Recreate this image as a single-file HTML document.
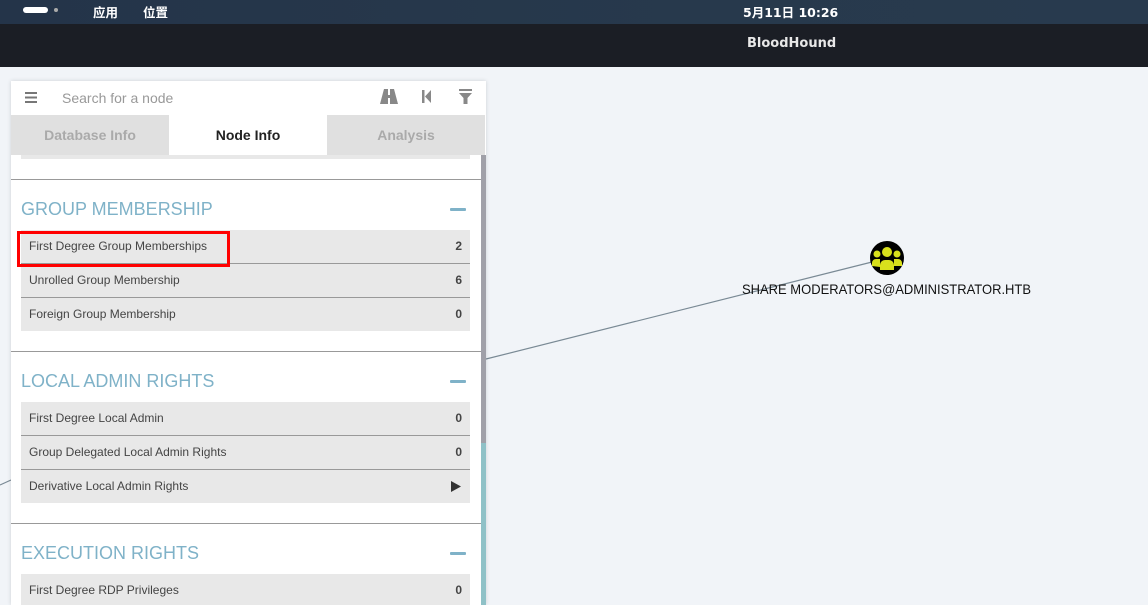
<!DOCTYPE html>
<html><head><meta charset="utf-8"><style>
*{margin:0;padding:0;box-sizing:border-box}
body{width:1148px;height:605px;overflow:hidden;background:#f1f4f8;font-family:"Liberation Sans","Noto Sans CJK SC",sans-serif;position:relative}
.top{position:absolute;left:0;top:0;width:1148px;height:24px;background:linear-gradient(90deg,#243449,#27394c 60%,#283a4e);color:#fff;font-family:"DejaVu Sans","Noto Sans CJK SC",sans-serif;font-size:12.5px;font-weight:bold}
.hdr{position:absolute;left:0;top:24px;width:1148px;height:43px;background:#1b1e25;color:#e8e8e8;font-family:"DejaVu Sans",sans-serif;font-size:13px;font-weight:bold}
.panel{position:absolute;left:11px;top:81px;width:475px;height:524px;background:#fff;box-shadow:0 0 4px rgba(0,0,0,.15);overflow:hidden}
.search{height:34px;position:relative;color:#999;font-size:14px}
.tabs{position:absolute;top:34px;left:0;width:475px;height:40px;font-weight:bold;font-size:14px}
.tab{position:absolute;top:0;height:40px;line-height:40px;text-align:center;background:#e0e0e0;color:#aaa}
.sep{position:absolute;left:0;width:470px;border-top:1px solid #999}
.h{position:absolute;left:10px;font-size:18px;color:#7fb2c8}
.minus{position:absolute;left:439px;width:16px;height:3px;background:#7fb2c8;border-radius:1px}
.row{position:absolute;left:10px;width:449px;height:34px;background:#e8e8e8;font-size:12px;color:#444;line-height:32px;padding-left:8px;border-bottom:1px solid #999}
.row b{position:absolute;right:8px;top:0;color:#444}
</style></head><body>
<div class="top">
 <div style="position:absolute;left:23px;top:7px;width:25px;height:6px;border-radius:3px;background:#fff"></div>
 <div style="position:absolute;left:54px;top:8px;width:4px;height:4px;border-radius:2px;background:#aaa"></div>
 <span style="position:absolute;left:93px;top:2px">应用</span>
 <span style="position:absolute;left:143px;top:2px">位置</span>
 <span style="position:absolute;left:743px;top:2px">5月11日 10:26</span>
</div>
<div class="hdr"><span style="position:absolute;left:747px;top:12px">BloodHound</span></div>
<svg style="position:absolute;left:0;top:0" width="1148" height="605">
<line x1="486" y1="359" x2="872" y2="262" stroke="#7a8a95" stroke-width="1.2"/>
<line x1="0" y1="485" x2="11" y2="480" stroke="#7a8a95" stroke-width="1.2"/>
<circle cx="887" cy="258" r="17" fill="#000"/>
<circle cx="887" cy="252" r="5" fill="#d8e01c"/><circle cx="877" cy="254" r="3.5" fill="#d8e01c"/><circle cx="897" cy="254" r="3.5" fill="#d8e01c"/>
<path d="M872 266 v-3 a4 4 0 0 1 4-4 h4 v8z M894 259 h4 a4 4 0 0 1 4 4 v3 h-8z M880 270 v-5 a5 5 0 0 1 5-5 h4 a5 5 0 0 1 5 5 v5z" fill="#d8e01c"/>
<text x="742" y="294" font-family="Liberation Sans,sans-serif" font-size="14" fill="#111" textLength="289" lengthAdjust="spacingAndGlyphs">SHARE MODERATORS@ADMINISTRATOR.HTB</text>
</svg>
<div class="panel">
 <div class="search">
  <svg style="position:absolute;left:14px;top:11px" width="12" height="11"><rect y="0" width="12" height="2" fill="#777"/><rect y="4.5" width="12" height="2" fill="#777"/><rect y="9" width="12" height="2" fill="#777"/></svg>
  <span style="position:absolute;left:51px;top:9px">Search for a node</span>
  <svg style="position:absolute;left:369px;top:8px" width="18" height="15"><path d="M4 0h4v15H0zM10 0h4l4 15h-8z M7 6h4v3H7z" fill="#888"/></svg>
  <svg style="position:absolute;left:411px;top:9px" width="10" height="13"><rect x="0" y="0" width="2.5" height="13" fill="#888"/><path d="M9 0v13L3 6.5z" fill="#888"/></svg>
  <svg style="position:absolute;left:448px;top:8px" width="13" height="15"><rect width="13" height="2" fill="#888"/><path d="M0 4h13l-4.5 5v6h-4v-6z" fill="#888"/></svg>
 </div>
 <div class="tabs">
  <div class="tab" style="left:0;width:158px">Database Info</div>
  <div class="tab" style="left:158px;width:158px;background:#fff;color:#222">Node Info</div>
  <div class="tab" style="left:316px;width:158px">Analysis</div>
 </div>
 <div style="position:absolute;left:10px;top:74px;width:449px;height:4px;background:#e8e8e8"></div>
 <div style="position:absolute;left:470px;top:74px;width:6px;height:450px;background:#8fc1c7"></div>
 <div style="position:absolute;left:470px;top:74px;width:6px;height:288px;background:#a0a0a8"></div>
 <div class="sep" style="top:98px"></div>
 <div class="h" style="top:118px">GROUP MEMBERSHIP</div><div class="minus" style="top:127px"></div>
 <div class="row" style="top:149px">First Degree Group Memberships<b>2</b></div>
 <div class="row" style="top:183px">Unrolled Group Membership<b>6</b></div>
 <div class="row" style="top:217px;border-bottom:none;height:33px">Foreign Group Membership<b>0</b></div>
 <div style="position:absolute;left:6px;top:150px;width:213px;height:36px;border:3px solid #f00"></div>
 <div class="sep" style="top:270px"></div>
 <div class="h" style="top:290px">LOCAL ADMIN RIGHTS</div><div class="minus" style="top:299px"></div>
 <div class="row" style="top:321px">First Degree Local Admin<b>0</b></div>
 <div class="row" style="top:355px">Group Delegated Local Admin Rights<b>0</b></div>
 <div class="row" style="top:389px;border-bottom:none;height:33px">Derivative Local Admin Rights<svg style="position:absolute;right:9px;top:11px" width="10" height="11"><path d="M0 0L10 5.5L0 11z" fill="#333"/></svg></div>
 <div class="sep" style="top:442px"></div>
 <div class="h" style="top:462px">EXECUTION RIGHTS</div><div class="minus" style="top:471px"></div>
 <div class="row" style="top:493px">First Degree RDP Privileges<b>0</b></div>
</div>
</body></html>
